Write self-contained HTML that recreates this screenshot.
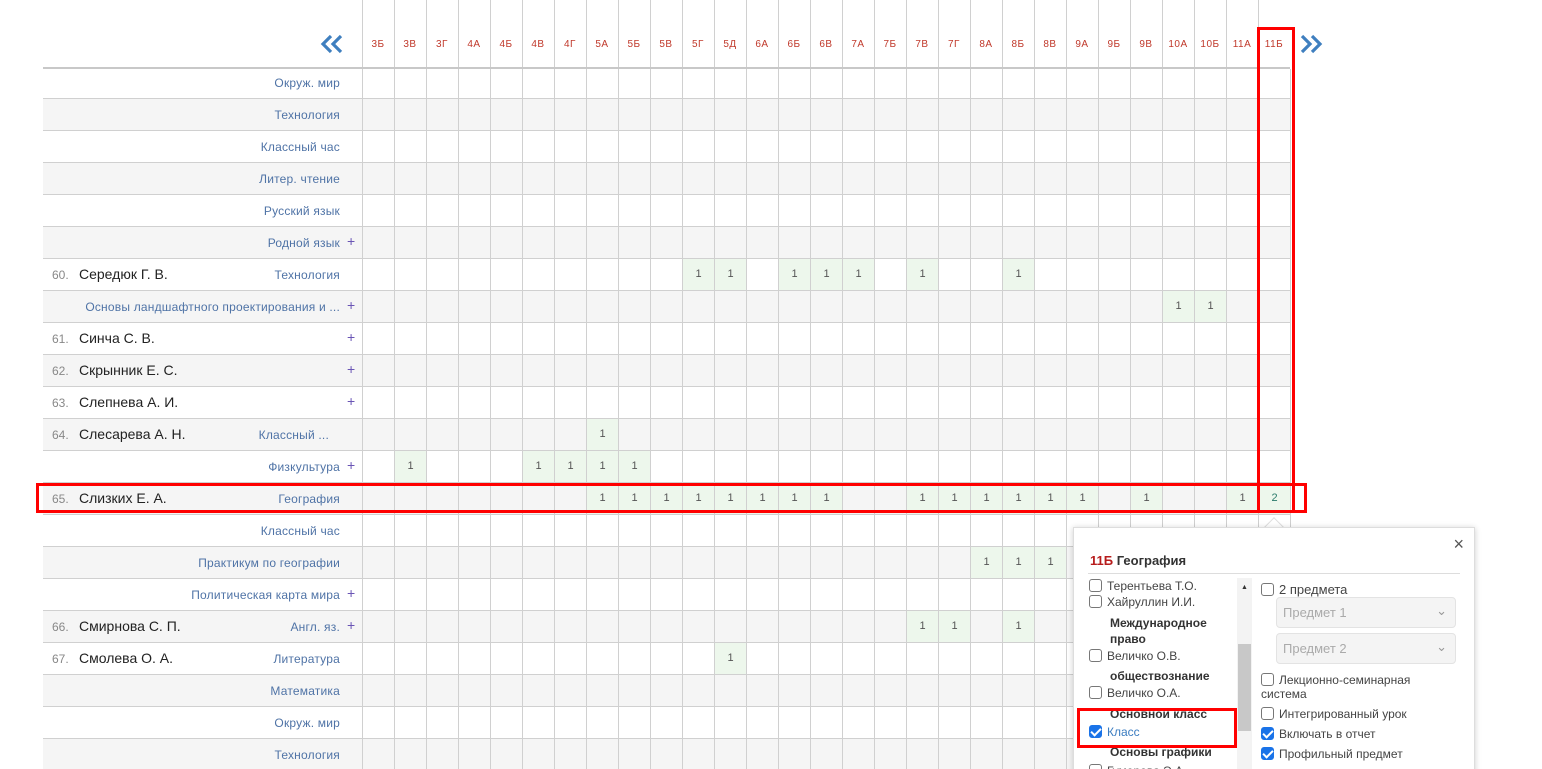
<!DOCTYPE html>
<html><head><meta charset="utf-8"><style>
*{margin:0;padding:0;box-sizing:border-box}
html,body{width:1542px;height:769px;overflow:hidden}
body{background:#fff;font-family:"Liberation Sans",sans-serif;position:relative}
.hdr{position:absolute;left:362px;top:0;width:928px;height:68px;background:repeating-linear-gradient(90deg,#d0d0d0 0,#d0d0d0 1px,transparent 1px,transparent 32px);}
.hdr span{position:absolute;top:39px;width:32px;text-align:center;font-size:10px;color:#c0392b;letter-spacing:.5px}
.hline{position:absolute;left:43px;top:67px;width:1247px;height:2px;background:#c8c8c8}
.row{position:absolute;left:43px;width:1247px;height:32px;border-bottom:1px solid #d0d0d0}
.row.g{background:#f5f5f5}
.vl{position:absolute;left:362px;top:69px;width:929px;height:700px;background:repeating-linear-gradient(90deg,#d0d0d0 0,#d0d0d0 1px,transparent 1px,transparent 32px)}
.num{position:absolute;left:9px;top:9px;font-size:12px;color:#888}
.nm{position:absolute;left:36px;top:7px;font-size:14px;color:#222}
.sb{position:absolute;right:950px;top:9px;font-size:12px;color:#4f73a6;white-space:nowrap;letter-spacing:.2px}
.pl{position:absolute;left:304px;top:6px;font-size:14px;color:#6a55b5}
.c{position:absolute;width:31px;height:31px;background:#edf7ec;font-size:11px;color:#555;text-align:center;line-height:31px}
.red{position:absolute;border:3px solid #f00}
.pop{position:absolute;left:1073px;top:527px;width:402px;height:250px;background:#fff;border:1px solid #ddd;box-shadow:0 1px 6px rgba(0,0,0,.2);font-size:12px;color:#444}
.cb{display:inline-block;width:13px;height:13px;border:1px solid #777;border-radius:3px;vertical-align:-2px;margin-right:5px;background:#fff}
.cb.on{background:#1a73e8;border-color:#1a73e8;position:relative}
.cb.on:after{content:"";position:absolute;left:3px;top:0px;width:4px;height:8px;border:solid #fff;border-width:0 2px 2px 0;transform:rotate(45deg)}
.it{position:absolute;white-space:nowrap}
.b{font-weight:bold;color:#333}
.sel{position:absolute;left:202px;width:180px;height:31px;border:1px solid #e3e3e3;border-radius:4px;background:#f4f4f4;color:#aaa;font-size:13px;padding:7px 6px}
</style></head><body>
<div class="hdr">
<span style="left:0">3Б</span><span style="left:32px">3В</span><span style="left:64px">3Г</span><span style="left:96px">4А</span><span style="left:128px">4Б</span><span style="left:160px">4В</span><span style="left:192px">4Г</span><span style="left:224px">5А</span><span style="left:256px">5Б</span><span style="left:288px">5В</span><span style="left:320px">5Г</span><span style="left:352px">5Д</span><span style="left:384px">6А</span><span style="left:416px">6Б</span><span style="left:448px">6В</span><span style="left:480px">7А</span><span style="left:512px">7Б</span><span style="left:544px">7В</span><span style="left:576px">7Г</span><span style="left:608px">8А</span><span style="left:640px">8Б</span><span style="left:672px">8В</span><span style="left:704px">9А</span><span style="left:736px">9Б</span><span style="left:768px">9В</span><span style="left:800px">10А</span><span style="left:832px">10Б</span><span style="left:864px">11А</span><span style="left:896px">11Б</span>
</div>
<svg style="position:absolute;left:320px;top:34px" width="24" height="20" viewBox="0 0 24 20"><path d="M11 2 L3 10 L11 18 M21 2 L13 10 L21 18" fill="none" stroke="#3f7fbf" stroke-width="3.2"/></svg>
<svg style="position:absolute;left:1299px;top:34px" width="24" height="20" viewBox="0 0 24 20"><path d="M3 2 L11 10 L3 18 M13 2 L21 10 L13 18" fill="none" stroke="#3f7fbf" stroke-width="3.2"/></svg>

<div class="row" style="top:67px"><span class="sb">Окруж. мир</span></div>
<div class="row g" style="top:99px"><span class="sb">Технология</span></div>
<div class="row" style="top:131px"><span class="sb">Классный час</span></div>
<div class="row g" style="top:163px"><span class="sb">Литер. чтение</span></div>
<div class="row" style="top:195px"><span class="sb">Русский язык</span></div>
<div class="row g" style="top:227px"><span class="sb">Родной язык</span><span class="pl">+</span></div>
<div class="row" style="top:259px"><span class="num">60.</span><span class="nm">Середюк Г. В.</span><span class="sb">Технология</span></div>
<div class="row g" style="top:291px"><span class="sb">Основы ландшафтного проектирования и ...</span><span class="pl">+</span></div>
<div class="row" style="top:323px"><span class="num">61.</span><span class="nm">Синча С. В.</span><span class="pl">+</span></div>
<div class="row g" style="top:355px"><span class="num">62.</span><span class="nm">Скрынник Е. С.</span><span class="pl">+</span></div>
<div class="row" style="top:387px"><span class="num">63.</span><span class="nm">Слепнева А. И.</span><span class="pl">+</span></div>
<div class="row g" style="top:419px"><span class="num">64.</span><span class="nm">Слесарева А. Н.</span><span class="sb" style="right:961px">Классный ...</span></div>
<div class="row" style="top:451px"><span class="sb">Физкультура</span><span class="pl">+</span></div>
<div class="row g" style="top:483px"><span class="num">65.</span><span class="nm">Слизких Е. А.</span><span class="sb">География</span></div>
<div class="row" style="top:515px"><span class="sb">Классный час</span></div>
<div class="row g" style="top:547px"><span class="sb">Практикум по географии</span></div>
<div class="row" style="top:579px"><span class="sb">Политическая карта мира</span><span class="pl">+</span></div>
<div class="row g" style="top:611px"><span class="num">66.</span><span class="nm">Смирнова С. П.</span><span class="sb">Англ. яз.</span><span class="pl">+</span></div>
<div class="row" style="top:643px"><span class="num">67.</span><span class="nm">Смолева О. А.</span><span class="sb">Литература</span></div>
<div class="row g" style="top:675px"><span class="sb">Математика</span></div>
<div class="row" style="top:707px"><span class="sb">Окруж. мир</span></div>
<div class="row g" style="top:739px"><span class="sb">Технология</span></div>
<div class="hline"></div>

<div class="c" style="left:683px;top:259px">1</div><div class="c" style="left:715px;top:259px">1</div><div class="c" style="left:779px;top:259px">1</div><div class="c" style="left:811px;top:259px">1</div><div class="c" style="left:843px;top:259px">1</div><div class="c" style="left:907px;top:259px">1</div><div class="c" style="left:1003px;top:259px">1</div>
<div class="c" style="left:1163px;top:291px">1</div><div class="c" style="left:1195px;top:291px">1</div>
<div class="c" style="left:587px;top:419px">1</div>
<div class="c" style="left:395px;top:451px">1</div><div class="c" style="left:523px;top:451px">1</div><div class="c" style="left:555px;top:451px">1</div><div class="c" style="left:587px;top:451px">1</div><div class="c" style="left:619px;top:451px">1</div>
<div class="c" style="left:587px;top:483px">1</div><div class="c" style="left:619px;top:483px">1</div><div class="c" style="left:651px;top:483px">1</div><div class="c" style="left:683px;top:483px">1</div><div class="c" style="left:715px;top:483px">1</div><div class="c" style="left:747px;top:483px">1</div><div class="c" style="left:779px;top:483px">1</div><div class="c" style="left:811px;top:483px">1</div><div class="c" style="left:907px;top:483px">1</div><div class="c" style="left:939px;top:483px">1</div><div class="c" style="left:971px;top:483px">1</div><div class="c" style="left:1003px;top:483px">1</div><div class="c" style="left:1035px;top:483px">1</div><div class="c" style="left:1067px;top:483px">1</div><div class="c" style="left:1131px;top:483px">1</div><div class="c" style="left:1227px;top:483px">1</div><div class="c" style="left:1259px;top:483px;color:#2a7a6a">2</div>
<div class="c" style="left:971px;top:547px">1</div><div class="c" style="left:1003px;top:547px">1</div><div class="c" style="left:1035px;top:547px">1</div>
<div class="c" style="left:907px;top:611px">1</div><div class="c" style="left:939px;top:611px">1</div><div class="c" style="left:1003px;top:611px">1</div>
<div class="c" style="left:715px;top:643px">1</div>
<div class="vl"></div>

<div class="red" style="left:1257px;top:27px;width:38px;height:486px"></div>
<div class="red" style="left:36px;top:483px;width:1271px;height:30px"></div>

<div style="position:absolute;left:1267px;top:520px;width:14px;height:14px;background:#fff;border-left:1px solid #ddd;border-top:1px solid #ddd;transform:rotate(45deg);z-index:2"></div>
<div class="pop" style="z-index:3">
<div style="position:absolute;right:10px;top:6px;font-size:18px;color:#555">×</div>
<div class="it" style="left:16px;top:25px;font-size:13px;font-weight:bold;color:#333"><span style="color:#b71c1c">11Б</span> География</div>
<div style="position:absolute;left:14px;top:45px;width:372px;height:1px;background:#ddd"></div>
<div class="it" style="left:15px;top:51px"><span class="cb"></span>Терентьева Т.О.</div>
<div class="it" style="left:15px;top:67px"><span class="cb"></span>Хайруллин И.И.</div>
<div class="it b" style="left:36px;top:87px;line-height:16px">Международное<br>право</div>
<div class="it" style="left:15px;top:121px"><span class="cb"></span>Величко О.В.</div>
<div class="it b" style="left:36px;top:141px">обществознание</div>
<div class="it" style="left:15px;top:158px"><span class="cb"></span>Величко О.А.</div>
<div class="it b" style="left:36px;top:179px">Основной класс</div>
<div class="it" style="left:15px;top:197px;color:#3a7cc0"><span class="cb on"></span>Класс</div>
<div class="it b" style="left:36px;top:217px">Основы графики</div>
<div class="it" style="left:15px;top:236px"><span class="cb"></span>Гумерова Э.А.</div>
<div style="position:absolute;left:163px;top:50px;width:15px;height:215px;background:#f3f3f3"></div>
<div style="position:absolute;left:167px;top:56px;font-size:7px;color:#333">▲</div>
<div style="position:absolute;left:164px;top:116px;width:13px;height:87px;background:#c8c8c8"></div>
<div style="position:absolute;left:3px;top:180px;width:160px;height:40px;border:3px solid #f00"></div>
<div class="it" style="left:187px;top:54px;font-size:13px"><span class="cb"></span>2 предмета</div>
<div class="sel" style="top:69px">Предмет 1<span style="position:absolute;right:8px;top:5px;color:#999">⌄</span></div>
<div class="sel" style="top:105px">Предмет 2<span style="position:absolute;right:8px;top:5px;color:#999">⌄</span></div>
<div class="it" style="left:187px;top:145px;line-height:14px"><span class="cb"></span>Лекционно-семинарная<br>система</div>
<div class="it" style="left:187px;top:179px"><span class="cb"></span>Интегрированный урок</div>
<div class="it" style="left:187px;top:199px"><span class="cb on"></span>Включать в отчет</div>
<div class="it" style="left:187px;top:219px"><span class="cb on"></span>Профильный предмет</div>
</div>
</body></html>
